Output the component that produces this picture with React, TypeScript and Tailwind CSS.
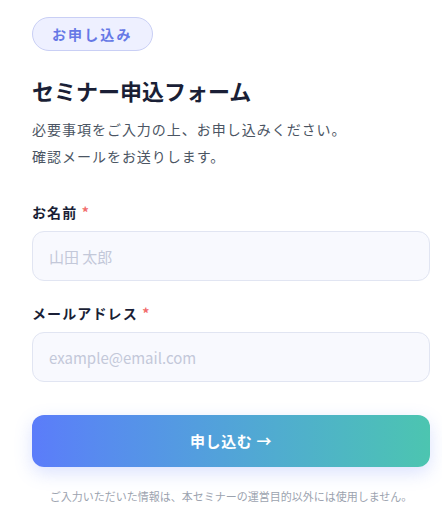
export default function App() {
  return (
    <div
      className="min-h-[510px] w-[442px] bg-white pl-8 pr-3 pt-[17px]"
      style={{ fontFamily: '"Noto Sans CJK JP", "Noto Sans", sans-serif' }}
    >
      {/* Badge */}
      <span className="inline-flex h-[34px] items-center rounded-full border border-[#c9cff5] bg-[#eef0ff] px-[19px] text-[14px] font-bold tracking-[0.15em] text-[#6679e6]">
        お申し込み
      </span>

      {/* Heading */}
      <h1 className="mt-[24px] text-[22px] font-bold leading-[30px] text-[#1a1f36]">
        セミナー申込フォーム
      </h1>
      <p className="mt-[11px] text-[14px] leading-[27px] tracking-[0.07em] text-[#4b5563]">
        必要事項をご入力の上、お申し込みください。
        <br />
        確認メールをお送りします。
      </p>

      {/* Form */}
      <form className="mt-[32px] flex flex-col" onSubmit={(e) => e.preventDefault()}>
        <label className="text-[14px] font-bold leading-[20px] tracking-[0.08em] text-[#1a1f36]">
          お名前 <span className="text-[#f26b6b]">*</span>
        </label>
        <input
          type="text"
          placeholder="山田 太郎"
          className="mt-[9px] h-[50px] w-full rounded-[12px] border border-[#e1e5f2] bg-[#f8f9fe] px-4 text-[15px] text-[#1a1f36] outline-none placeholder:text-[#c3c8d9]"
        />

        <label className="mt-[22px] text-[14px] font-bold leading-[20px] tracking-[0.08em] text-[#1a1f36]">
          メールアドレス <span className="text-[#f26b6b]">*</span>
        </label>
        <input
          type="email"
          placeholder="example@email.com"
          className="mt-[9px] h-[50px] w-full rounded-[12px] border border-[#e1e5f2] bg-[#f8f9fe] px-4 text-[15px] text-[#1a1f36] outline-none placeholder:text-[#c3c8d9]"
        />

        <button
          type="submit"
          className="mt-[33px] h-[52px] w-full rounded-[12px] bg-gradient-to-r from-[#5b7cfa] to-[#4cc5b0] text-[15px] font-bold tracking-[0.04em] text-white shadow-[0_6px_18px_rgba(91,124,250,0.22)]"
        >
          申し込む →
        </button>

        <p className="mt-[21px] text-center text-[11px] leading-[16px] text-[#9ca3af]">
          ご入力いただいた情報は、本セミナーの運営目的以外には使用しません。
        </p>
      </form>
    </div>
  );
}
